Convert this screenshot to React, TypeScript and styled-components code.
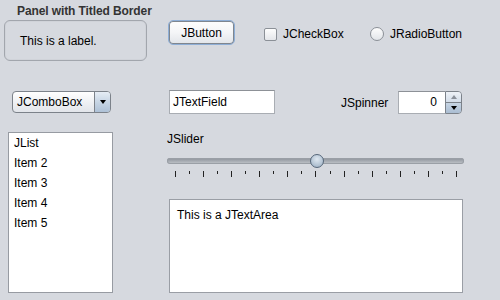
import React from "react";
import styled, { createGlobalStyle } from "styled-components";

const Global = createGlobalStyle`
  html, body { margin: 0; padding: 0; background: #d6d9df; }
  body { font-family: "Liberation Sans", Arial, sans-serif; font-size: 12px; color: #000; }
`;

const Page = styled.div`
  width: 500px;
  height: 300px;
  background: #d6d9df;
  overflow: hidden;
  display: flex;
  flex-direction: column;
`;

const TopRow = styled.div`
  display: flex;
  align-items: flex-start;
  padding: 4px 0 0 4px;
  height: 57px;
`;

const TitledPanel = styled.div`
  width: 143px;
  flex-shrink: 0;
  display: flex;
  flex-direction: column;
`;

const PanelTitle = styled.div`
  font-weight: bold;
  color: #333;
  line-height: 14px;
  height: 16px;
  padding-left: 13px;
  letter-spacing: -0.1px;
  white-space: nowrap;
`;

const PanelBox = styled.div`
  height: 41px;
  box-sizing: border-box;
  border: 1px solid #a2a6ad;
  border-radius: 6px;
  box-shadow: inset 0 0 0 1px #d0d3d9;
  display: flex;
  align-items: center;
  padding-left: 15px;
`;

const Button = styled.button`
  margin: 16px 0 0 21px;
  width: 67px;
  height: 25px;
  flex-shrink: 0;
  box-sizing: border-box;
  border: 1px solid #8eaed6;
  border-radius: 5px;
  box-shadow: inset 0 0 0 1px #7f868f;
  background: linear-gradient(#fefefe, #f4f5f7 50%, #e1e4e9);
  font: inherit;
  color: #000;
  padding: 0;
  display: flex;
  align-items: center;
  justify-content: center;
`;

const Choice = styled.label<{ $width: number; $left: number }>`
  margin: 23px 0 0 ${(p) => p.$left}px;
  width: ${(p) => p.$width}px;
  flex-shrink: 0;
  display: flex;
  align-items: center;
  gap: 6px;
  height: 14px;
  line-height: 14px;
  white-space: nowrap;
`;

const CheckMark = styled.span`
  width: 13px;
  height: 13px;
  box-sizing: border-box;
  border: 1px solid #8b9097;
  border-radius: 2px;
  background: linear-gradient(#fdfdfd, #e4e6ea);
`;

const RadioMark = styled.span`
  width: 14px;
  height: 14px;
  box-sizing: border-box;
  border: 1px solid #8b9097;
  border-radius: 50%;
  background: linear-gradient(#fdfdfd, #e2e5e9);
`;

const MidRow = styled.div`
  display: flex;
  align-items: flex-start;
  margin-top: 29px;
  padding-left: 12px;
  height: 42px;
`;

const Combo = styled.div`
  margin-top: 1px;
  width: 99px;
  height: 22px;
  box-sizing: border-box;
  border: 1px solid #7c828a;
  border-radius: 4px;
  background: linear-gradient(#ffffff, #eef0f3 55%, #e2e5ea);
  display: flex;
  overflow: hidden;
`;

const ComboText = styled.div`
  flex: 1;
  padding-left: 4px;
  line-height: 20px;
`;

const ComboArrow = styled.div`
  width: 15px;
  border-left: 1px solid #7c828a;
  background: linear-gradient(#e6edf5, #c4d3e3 55%, #aec1d6);
  display: flex;
  align-items: center;
  justify-content: center;
`;

const Tri = styled.span<{ $up?: boolean; $color?: string; $size?: number }>`
  width: 0;
  height: 0;
  border-left: ${(p) => p.$size ?? 4}px solid transparent;
  border-right: ${(p) => p.$size ?? 4}px solid transparent;
  ${(p) =>
    p.$up
      ? `border-bottom: ${(p.$size ?? 4) + 1}px solid ${p.$color ?? "#000"};`
      : `border-top: ${(p.$size ?? 4) + 1}px solid ${p.$color ?? "#000"};`}
`;

const TextField = styled.div`
  margin-left: 58px;
  width: 106px;
  height: 24px;
  box-sizing: border-box;
  border: 1px solid #a9adb3;
  border-top-color: #8d9197;
  background: #fff;
  padding-left: 3px;
  line-height: 22px;
`;

const SpinnerGroup = styled.div`
  margin: 1px 0 0 66px;
  display: flex;
  align-items: center;
  height: 23px;
`;

const SpinnerLabel = styled.span`
  width: 57px;
`;

const SpinnerField = styled.div`
  width: 47px;
  height: 23px;
  box-sizing: border-box;
  border: 1px solid #a9adb3;
  border-top-color: #8d9197;
  border-right: none;
  background: #fff;
  text-align: right;
  padding-right: 8px;
  line-height: 21px;
`;

const SpinnerButtons = styled.div`
  width: 17px;
  height: 23px;
  box-sizing: border-box;
  border: 1px solid #7c828a;
  border-radius: 0 4px 4px 0;
  overflow: hidden;
  display: flex;
  flex-direction: column;
`;

const SpinBtn = styled.div<{ $bottom?: boolean }>`
  flex: 1;
  display: flex;
  align-items: center;
  justify-content: center;
  background: ${(p) =>
    p.$bottom
      ? "linear-gradient(#c7d5e4, #aabdd2)"
      : "linear-gradient(#eef2f7, #d3dde9)"};
  ${(p) => (p.$bottom ? "border-top: 1px solid #7c828a;" : "")}
`;

const BottomRow = styled.div`
  display: flex;
  align-items: flex-start;
  padding-left: 8px;
`;

const List = styled.div`
  width: 105px;
  height: 161px;
  box-sizing: border-box;
  border: 1px solid #979ba2;
  background: #fff;
`;

const ListItem = styled.div`
  height: 20px;
  line-height: 20px;
  padding-left: 5px;
`;

const RightCol = styled.div`
  margin-left: 54px;
  width: 297px;
  display: flex;
  flex-direction: column;
`;

const SliderLabel = styled.div`
  line-height: 14px;
  height: 14px;
`;

const SliderTrack = styled.div`
  position: relative;
  margin-top: 12px;
  height: 6px;
  border-radius: 3px;
  background: linear-gradient(#8c9199, #a6abb2 50%, #c3c7cc);
  box-shadow: inset 0 0 0 1px #9a9fa6;
`;

const Thumb = styled.div<{ $pos: number }>`
  position: absolute;
  top: -4px;
  left: ${(p) => p.$pos}px;
  width: 14px;
  height: 14px;
  box-sizing: border-box;
  border-radius: 50%;
  border: 1px solid #56677a;
  background: radial-gradient(circle at 50% 35%, #dfe8f1, #aebfd0 70%, #98aabd);
`;

const Ticks = styled.div`
  margin-top: 7px;
  display: flex;
  justify-content: space-between;
  align-items: flex-start;
  padding: 0 7px 0 8px;
  height: 6px;
`;

const Tick = styled.span<{ $major: boolean }>`
  width: 1px;
  height: ${(p) => (p.$major ? 6 : 3)}px;
  background: #222;
`;

const TextArea = styled.div`
  margin: 22px 0 0 2px;
  width: 294px;
  height: 94px;
  box-sizing: border-box;
  border: 1px solid #9a9ea5;
  background: #fff;
  padding: 8px 0 0 7px;
  line-height: 14px;
`;

export default function App() {
  const ticks = Array.from({ length: 21 }, (_, i) => i);
  return (
    <Page>
      <Global />
      <TopRow>
        <TitledPanel>
          <PanelTitle>Panel with Titled Border</PanelTitle>
          <PanelBox>This is a label.</PanelBox>
        </TitledPanel>
        <Button>JButton</Button>
        <Choice $left={29} $width={106}>
          <CheckMark />
          JCheckBox
        </Choice>
        <Choice $left={0} $width={110}>
          <RadioMark />
          JRadioButton
        </Choice>
      </TopRow>
      <MidRow>
        <Combo>
          <ComboText>JComboBox</ComboText>
          <ComboArrow>
            <Tri $size={3} />
          </ComboArrow>
        </Combo>
        <TextField>JTextField</TextField>
        <SpinnerGroup>
          <SpinnerLabel>JSpinner</SpinnerLabel>
          <SpinnerField>0</SpinnerField>
          <SpinnerButtons>
            <SpinBtn>
              <Tri $up $size={3} $color="#8a9099" />
            </SpinBtn>
            <SpinBtn $bottom>
              <Tri $size={3} />
            </SpinBtn>
          </SpinnerButtons>
        </SpinnerGroup>
      </MidRow>
      <BottomRow>
        <List>
          {["JList", "Item 2", "Item 3", "Item 4", "Item 5"].map((t) => (
            <ListItem key={t}>{t}</ListItem>
          ))}
        </List>
        <RightCol>
          <SliderLabel>JSlider</SliderLabel>
          <SliderTrack>
            <Thumb $pos={143} />
          </SliderTrack>
          <Ticks>
            {ticks.map((i) => (
              <Tick key={i} $major={i % 2 === 0} />
            ))}
          </Ticks>
          <TextArea>This is a JTextArea</TextArea>
        </RightCol>
      </BottomRow>
    </Page>
  );
}
